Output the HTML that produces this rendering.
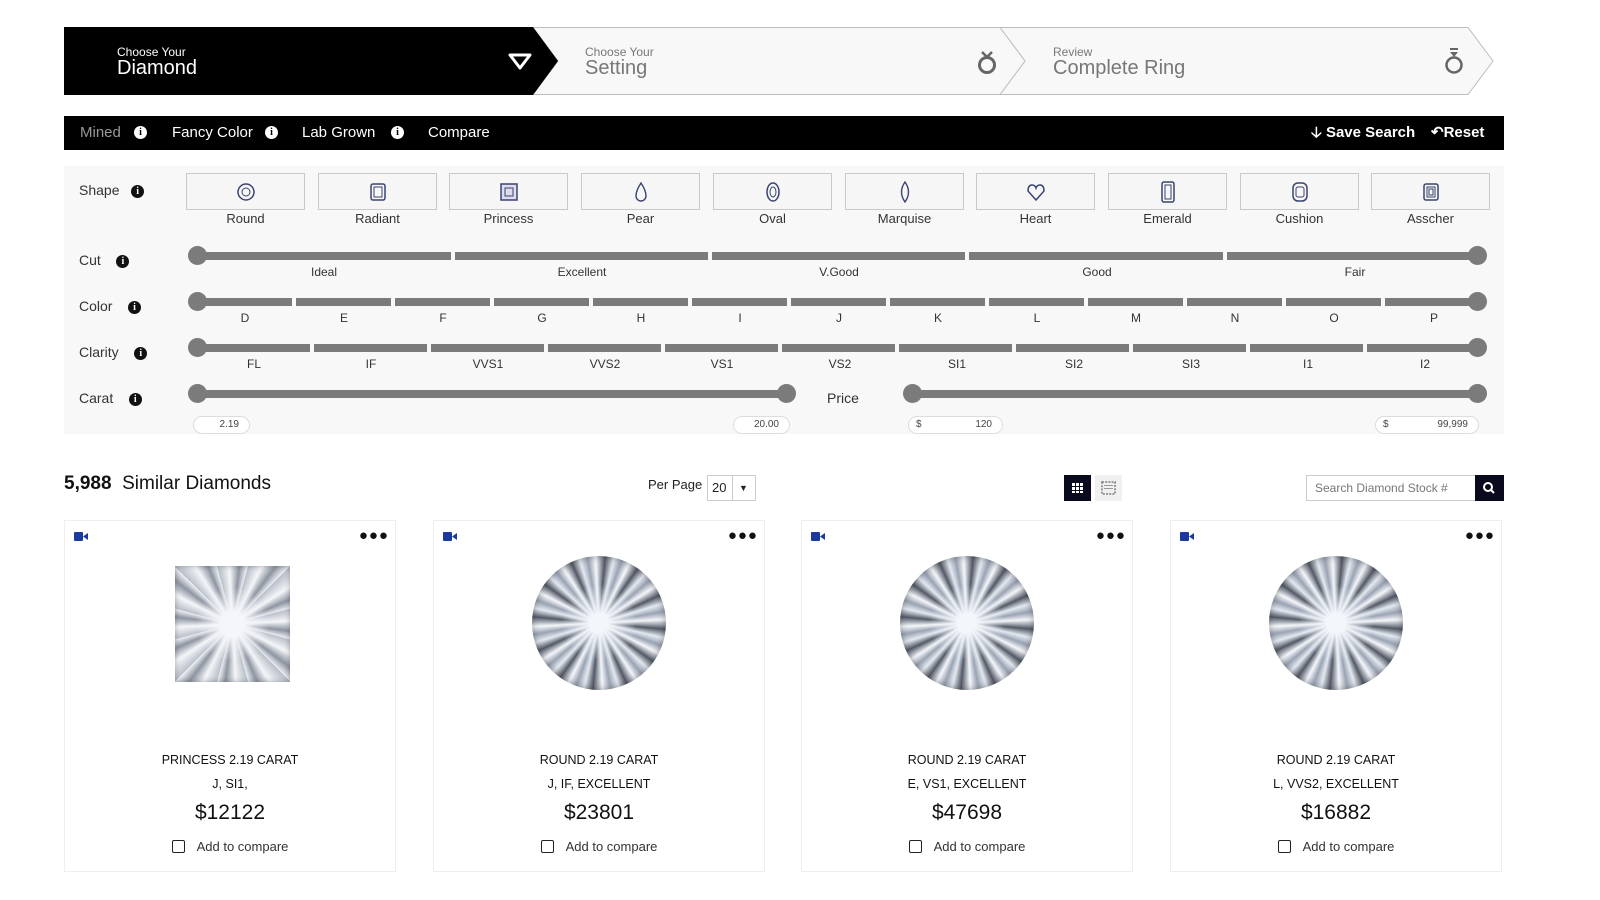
<!DOCTYPE html>
<html><head><meta charset="utf-8"><style>
*{box-sizing:border-box;margin:0;padding:0}
body{width:1600px;height:900px;background:#fff;font-family:"Liberation Sans",sans-serif;color:#222;position:relative;overflow:hidden}
.a{position:absolute}
.info{display:inline-block;width:13px;height:13px;border-radius:50%;background:#111;color:#fff;font:bold 10px/13px "Liberation Serif",serif;text-align:center;vertical-align:middle}
.nav .info{background:#fff;color:#000}
.lbl{font-size:14px;color:#333}
.track{position:absolute;height:8px;background:#7b7b7b}
.knob{position:absolute;width:19px;height:19px;border-radius:50%;background:#7b7b7b}
.tl{position:absolute;font-size:12px;color:#333;transform:translateX(-50%)}
.shape{position:absolute;top:173px;width:119px;height:37px;border:1px solid #c8c8c8;background:#f6f6f6;display:flex;align-items:center;justify-content:center}
.sl{position:absolute;top:211px;font-size:13px;color:#333;width:119px;text-align:center}
.inp{position:absolute;height:18px;border:1px solid #ddd;border-radius:9px;background:#fff;font-size:10px;color:#444;line-height:16px;text-align:right;padding-right:10px}
.card{position:absolute;top:520px;width:332px;height:352px;border:1px solid #eee;background:#fff}
.card .cam{position:absolute;left:9px;top:11px;width:14px;height:9px}
.card .dots{position:absolute;right:6px;top:6px;font-size:15px;letter-spacing:1px;font-weight:bold;color:#111}
.card .t1{position:absolute;top:232px;width:100%;text-align:center;font-size:12.5px;color:#111}
.card .t2{position:absolute;top:256px;width:100%;text-align:center;font-size:12.5px;color:#111}
.card .pr{position:absolute;top:280px;width:100%;text-align:center;font-size:21px;color:#111}
.card .cmp{position:absolute;top:318px;width:100%;text-align:center;font-size:13px;color:#333}
.cb{display:inline-block;width:13px;height:13px;border:1.5px solid #222;border-radius:2px;vertical-align:middle;margin-right:12px;position:relative;top:-1px}
.dia{position:absolute;left:98px;top:35px;width:134px;height:134px;border-radius:50%;
background:radial-gradient(circle at 50% 50%,#f3f6fb 0 10%,rgba(240,244,250,.6) 22%,transparent 40%),repeating-conic-gradient(from 5deg,#4d525e 0deg,#e4eaf2 8deg,#9aa3b3 15deg,#f5f7fb 22deg,#5c6371 30deg);box-shadow:inset 0 0 8px rgba(0,0,0,.35)}
.sq{position:absolute;left:110px;top:45px;width:115px;height:116px;
background:radial-gradient(circle,#f4f6f9 0 15%,transparent 45%),repeating-conic-gradient(from 45deg at 50% 50%,#b9bfc9 0deg,#f4f6f9 12deg,#8e95a1 22deg,#eef1f5 30deg);box-shadow:inset 0 0 6px rgba(0,0,0,.3)}
</style></head><body>

<svg class="a" style="left:0;top:0" width="1600" height="100">
<polygon points="1000,27.5 1468,27.5 1493,61 1468,94.5 1000,94.5 1025,61" fill="#f8f8f8" stroke="#bdbdbd"/>
<polygon points="533,27.5 1000,27.5 1025,61 1000,94.5 533,94.5 558,61" fill="#f8f8f8" stroke="#bdbdbd"/>
<polygon points="64,27 533,27 558,61 533,95 64,95" fill="#000"/>
<path d="M510 55 L530 55 L520 68 Z" fill="none" stroke="#fff" stroke-width="3" stroke-linejoin="round"/>
<circle cx="987" cy="65" r="7.5" fill="none" stroke="#666" stroke-width="3"/><path d="M982 52 L987 57 L992 52" stroke="#666" stroke-width="2.5" fill="none"/>
<circle cx="1454" cy="65" r="7.5" fill="none" stroke="#666" stroke-width="2.5"/><path d="M1450 52 h8 l-4 5 z" fill="#666"/><path d="M1450 49 h8" stroke="#666" stroke-width="2"/>
</svg>
<div class="a" style="left:117px;top:45px;color:#fff;font-size:12px">Choose Your</div>
<div class="a" style="left:117px;top:57px;color:#fff;font-size:20px">Diamond</div>
<div class="a" style="left:585px;top:45px;color:#777;font-size:12px">Choose Your</div>
<div class="a" style="left:585px;top:57px;color:#777;font-size:20px">Setting</div>
<div class="a" style="left:1053px;top:45px;color:#777;font-size:12px">Review</div>
<div class="a" style="left:1053px;top:57px;color:#777;font-size:20px">Complete Ring</div>

<div class="a nav" style="left:64px;top:116px;width:1440px;height:34px;background:#000;color:#fff;font-size:15px;line-height:34px">
<span class="a" style="left:16px;color:#999">Mined</span><span class="a info" style="left:70px;top:10px;line-height:13px">i</span>
<span class="a" style="left:108px">Fancy Color</span><span class="a info" style="left:201px;top:10px;line-height:13px">i</span>
<span class="a" style="left:238px">Lab Grown</span><span class="a info" style="left:327px;top:10px;line-height:13px">i</span>
<span class="a" style="left:364px">Compare</span>
<span class="a" style="left:1247px;font-weight:bold">&#129123; Save Search</span>
<span class="a" style="left:1367px;font-weight:bold">&#8630;Reset</span>
</div>

<div class="a" style="left:64px;top:166px;width:1440px;height:268px;background:#f8f8f8"></div>
<div class="a lbl" style="left:79px;top:182px">Shape&nbsp;&nbsp; <span class="info">i</span></div>
<div class="a lbl" style="left:79px;top:252px">Cut&nbsp;&nbsp;&nbsp; <span class="info">i</span></div>
<div class="a lbl" style="left:79px;top:298px">Color&nbsp;&nbsp;&nbsp; <span class="info">i</span></div>
<div class="a lbl" style="left:79px;top:344px">Clarity&nbsp;&nbsp;&nbsp; <span class="info">i</span></div>
<div class="a lbl" style="left:79px;top:390px">Carat&nbsp;&nbsp;&nbsp; <span class="info">i</span></div>
<div class="a lbl" style="left:827px;top:390px">Price</div>

<div class="shape" style="left:186px"><svg width="20" height="20"><circle cx="10" cy="10" r="8" fill="none" stroke="#3a4470" stroke-width="1.5"/><circle cx="10" cy="10" r="4" fill="none" stroke="#3a4470"/></svg></div>
<div class="shape" style="left:318px"><svg width="20" height="20"><rect x="3" y="2" width="14" height="16" rx="2" fill="none" stroke="#3a4470" stroke-width="1.5"/><rect x="6" y="5" width="8" height="10" fill="none" stroke="#3a4470"/></svg></div>
<div class="shape" style="left:449px"><svg width="20" height="20"><rect x="2" y="2" width="16" height="16" fill="#dde" stroke="#3a4470" stroke-width="1.5"/><rect x="6" y="6" width="8" height="8" fill="none" stroke="#3a4470"/></svg></div>
<div class="shape" style="left:581px"><svg width="20" height="22"><path d="M10 2 C14 8 15 12 15 15 A5 5 0 0 1 5 15 C5 12 6 8 10 2Z" fill="none" stroke="#3a4470" stroke-width="1.4"/></svg></div>
<div class="shape" style="left:713px"><svg width="20" height="22"><ellipse cx="10" cy="11" rx="6" ry="9" fill="none" stroke="#3a4470" stroke-width="1.5"/><ellipse cx="10" cy="11" rx="3" ry="5" fill="none" stroke="#3a4470"/></svg></div>
<div class="shape" style="left:845px"><svg width="20" height="22"><path d="M10 1 Q17 11 10 21 Q3 11 10 1Z" fill="none" stroke="#3a4470" stroke-width="1.4"/></svg></div>
<div class="shape" style="left:976px"><svg width="20" height="20"><path d="M10 18 L2 9 Q2 3 6 3 Q9 3 10 6 Q11 3 14 3 Q18 3 18 9Z" fill="none" stroke="#3a4470" stroke-width="1.5"/></svg></div>
<div class="shape" style="left:1108px"><svg width="20" height="24"><rect x="4" y="2" width="12" height="20" rx="2" fill="none" stroke="#3a4470" stroke-width="1.5"/><rect x="7" y="5" width="6" height="14" fill="none" stroke="#3a4470"/></svg></div>
<div class="shape" style="left:1240px"><svg width="20" height="22"><rect x="3" y="2" width="14" height="18" rx="5" fill="none" stroke="#3a4470" stroke-width="1.5"/><rect x="6" y="6" width="8" height="10" rx="2" fill="none" stroke="#3a4470"/></svg></div>
<div class="shape" style="left:1371px"><svg width="20" height="20"><rect x="3" y="2" width="14" height="16" rx="2" fill="none" stroke="#3a4470" stroke-width="1.5"/><rect x="6" y="5" width="8" height="10" fill="none" stroke="#3a4470"/><rect x="8" y="7" width="4" height="6" fill="none" stroke="#3a4470"/></svg></div>
<div class="sl" style="left:186px">Round</div><div class="sl" style="left:318px">Radiant</div><div class="sl" style="left:449px">Princess</div><div class="sl" style="left:581px">Pear</div><div class="sl" style="left:713px">Oval</div><div class="sl" style="left:845px">Marquise</div><div class="sl" style="left:976px">Heart</div><div class="sl" style="left:1108px">Emerald</div><div class="sl" style="left:1240px">Cushion</div><div class="sl" style="left:1371px">Asscher</div>

<div class="track" style="left:197px;top:252px;width:1280px"></div>
<div class="a" style="left:451px;top:250px;width:4px;height:12px;background:#f8f8f8"></div>
<div class="a" style="left:708px;top:250px;width:4px;height:12px;background:#f8f8f8"></div>
<div class="a" style="left:965px;top:250px;width:4px;height:12px;background:#f8f8f8"></div>
<div class="a" style="left:1223px;top:250px;width:4px;height:12px;background:#f8f8f8"></div>
<div class="knob" style="left:188px;top:246px"></div><div class="knob" style="left:1468px;top:246px"></div>
<div class="tl" style="left:324px;top:265px">Ideal</div><div class="tl" style="left:582px;top:265px">Excellent</div><div class="tl" style="left:839px;top:265px">V.Good</div><div class="tl" style="left:1097px;top:265px">Good</div><div class="tl" style="left:1355px;top:265px">Fair</div>

<div class="track" style="left:197px;top:298px;width:1280px"></div>
<div class="a" style="left:292px;top:296px;width:4px;height:12px;background:#f8f8f8;box-shadow:99px 0 #f8f8f8,198px 0 #f8f8f8,297px 0 #f8f8f8,396px 0 #f8f8f8,495px 0 #f8f8f8,594px 0 #f8f8f8,693px 0 #f8f8f8,792px 0 #f8f8f8,891px 0 #f8f8f8,990px 0 #f8f8f8,1089px 0 #f8f8f8"></div>
<div class="knob" style="left:188px;top:292px"></div><div class="knob" style="left:1468px;top:292px"></div>
<div class="tl" style="left:245px;top:311px">D</div><div class="tl" style="left:344px;top:311px">E</div><div class="tl" style="left:443px;top:311px">F</div><div class="tl" style="left:542px;top:311px">G</div><div class="tl" style="left:641px;top:311px">H</div><div class="tl" style="left:740px;top:311px">I</div><div class="tl" style="left:839px;top:311px">J</div><div class="tl" style="left:938px;top:311px">K</div><div class="tl" style="left:1037px;top:311px">L</div><div class="tl" style="left:1136px;top:311px">M</div><div class="tl" style="left:1235px;top:311px">N</div><div class="tl" style="left:1334px;top:311px">O</div><div class="tl" style="left:1434px;top:311px">P</div>

<div class="track" style="left:197px;top:344px;width:1280px"></div>
<div class="a" style="left:310px;top:342px;width:4px;height:12px;background:#f8f8f8;box-shadow:117px 0 #f8f8f8,234px 0 #f8f8f8,351px 0 #f8f8f8,468px 0 #f8f8f8,585px 0 #f8f8f8,702px 0 #f8f8f8,819px 0 #f8f8f8,936px 0 #f8f8f8,1053px 0 #f8f8f8"></div>
<div class="knob" style="left:188px;top:338px"></div><div class="knob" style="left:1468px;top:338px"></div>
<div class="tl" style="left:254px;top:357px">FL</div><div class="tl" style="left:371px;top:357px">IF</div><div class="tl" style="left:488px;top:357px">VVS1</div><div class="tl" style="left:605px;top:357px">VVS2</div><div class="tl" style="left:722px;top:357px">VS1</div><div class="tl" style="left:840px;top:357px">VS2</div><div class="tl" style="left:957px;top:357px">SI1</div><div class="tl" style="left:1074px;top:357px">SI2</div><div class="tl" style="left:1191px;top:357px">SI3</div><div class="tl" style="left:1308px;top:357px">I1</div><div class="tl" style="left:1425px;top:357px">I2</div>

<div class="track" style="left:197px;top:390px;width:590px"></div>
<div class="knob" style="left:188px;top:384px"></div><div class="knob" style="left:777px;top:384px"></div>
<div class="track" style="left:912px;top:390px;width:565px"></div>
<div class="knob" style="left:903px;top:384px"></div><div class="knob" style="left:1468px;top:384px"></div>
<div class="inp" style="left:193px;top:416px;width:57px">2.19</div>
<div class="inp" style="left:733px;top:416px;width:57px">20.00</div>
<div class="inp" style="left:908px;top:416px;width:95px"><span style="position:absolute;left:7px">$</span>120</div>
<div class="inp" style="left:1375px;top:416px;width:104px"><span style="position:absolute;left:7px">$</span>99,999</div>

<div class="a" style="left:64px;top:473px;font-size:19px;color:#111"><b style="font-weight:600">5,988</b>&nbsp; Similar Diamonds</div>
<div class="a" style="left:648px;top:477px;font-size:13px;color:#222">Per Page</div>
<div class="a" style="left:707px;top:475px;width:49px;height:26px;border:1px solid #ccc;background:#fff;font-size:13px;line-height:24px;padding-left:4px">20<span style="position:absolute;left:24px;top:0;width:1px;height:24px;background:#ccc"></span><span style="position:absolute;left:31px;top:0;font-size:9px">&#9660;</span></div>
<div class="a" style="left:1064px;top:475px;width:27px;height:26px;background:#0a0a1e"><svg width="27" height="26"><g fill="#fff"><rect x="8" y="8" width="3" height="3"/><rect x="12" y="8" width="3" height="3"/><rect x="16" y="8" width="3" height="3"/><rect x="8" y="12" width="3" height="3"/><rect x="12" y="12" width="3" height="3"/><rect x="16" y="12" width="3" height="3"/><rect x="8" y="16" width="3" height="2"/><rect x="12" y="16" width="3" height="2"/><rect x="16" y="16" width="3" height="2"/></g></svg></div>
<div class="a" style="left:1095px;top:475px;width:27px;height:26px;background:#f0f0f0"><svg width="27" height="26"><g fill="#999"><rect x="7" y="7" width="13" height="12" fill="none" stroke="#999" stroke-dasharray="2 1.2" stroke-width="2"/><rect x="9" y="10" width="9" height="1"/><rect x="9" y="13" width="9" height="1"/></g></svg></div>
<div class="a" style="left:1306px;top:475px;width:170px;height:26px;border:1px solid #ccc;background:#fff;font-size:12px;line-height:24px;padding-left:8px;color:#777">Search Diamond Stock #</div>
<div class="a" style="left:1475px;top:475px;width:29px;height:26px;background:#0a0a1e"><svg width="29" height="26"><circle cx="13" cy="12" r="4" fill="none" stroke="#fff" stroke-width="2"/><path d="M16 15 L19 18" stroke="#fff" stroke-width="2"/></svg></div>

<div class="card" style="left:64px"><svg class="cam" viewBox="0 0 14 9"><rect width="9" height="9" rx="1" fill="#1a3aa0"/><path d="M9 4.5 L14 1 V8Z" fill="#1a3aa0"/></svg><div class="dots">&#9679;&#9679;&#9679;</div><div class="sq"></div>
<div class="t1">PRINCESS 2.19 CARAT</div><div class="t2">J, SI1,</div><div class="pr">$12122</div><div class="cmp"><span class="cb"></span>Add to compare</div></div>
<div class="card" style="left:433px"><svg class="cam" viewBox="0 0 14 9"><rect width="9" height="9" rx="1" fill="#1a3aa0"/><path d="M9 4.5 L14 1 V8Z" fill="#1a3aa0"/></svg><div class="dots">&#9679;&#9679;&#9679;</div><div class="dia"></div>
<div class="t1">ROUND 2.19 CARAT</div><div class="t2">J, IF, EXCELLENT</div><div class="pr">$23801</div><div class="cmp"><span class="cb"></span>Add to compare</div></div>
<div class="card" style="left:801px"><svg class="cam" viewBox="0 0 14 9"><rect width="9" height="9" rx="1" fill="#1a3aa0"/><path d="M9 4.5 L14 1 V8Z" fill="#1a3aa0"/></svg><div class="dots">&#9679;&#9679;&#9679;</div><div class="dia"></div>
<div class="t1">ROUND 2.19 CARAT</div><div class="t2">E, VS1, EXCELLENT</div><div class="pr">$47698</div><div class="cmp"><span class="cb"></span>Add to compare</div></div>
<div class="card" style="left:1170px"><svg class="cam" viewBox="0 0 14 9"><rect width="9" height="9" rx="1" fill="#1a3aa0"/><path d="M9 4.5 L14 1 V8Z" fill="#1a3aa0"/></svg><div class="dots">&#9679;&#9679;&#9679;</div><div class="dia"></div>
<div class="t1">ROUND 2.19 CARAT</div><div class="t2">L, VVS2, EXCELLENT</div><div class="pr">$16882</div><div class="cmp"><span class="cb"></span>Add to compare</div></div>
</body></html>
